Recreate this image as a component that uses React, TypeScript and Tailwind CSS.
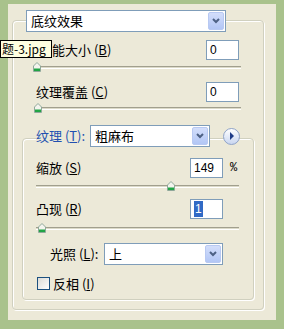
import React from "react";

const cjk = { fontFamily: '"Noto Sans CJK SC", "Noto Sans", sans-serif' };

function Thumb() {
  return (
    <svg width="8" height="10" viewBox="0 0 8 10" className="block">
      <polygon points="4,0.5 7.5,4 7.5,9.5 0.5,9.5 0.5,4" fill="#f4f4ee" stroke="#8fa89a" strokeWidth="1" />
      <rect x="1" y="6.5" width="6" height="2.5" fill="#21a545" />
    </svg>
  );
}

function Slider({ pos, width }: { pos: number; width: number }) {
  return (
    <div className="relative h-[10px]" style={{ width }}>
      <div className="absolute left-0 right-0 top-[4px] h-[3px] border-t border-t-[#a19f8e] border-b border-b-white bg-[#dcdac8]" />
      <div className="absolute top-0" style={{ left: pos }}>
        <Thumb />
      </div>
    </div>
  );
}

function Combo({ text, w }: { text: string; w: number }) {
  return (
    <div
      className="flex h-[22px] items-stretch border border-[#7f9db9] bg-white p-[1px]"
      style={{ width: w }}
    >
      <div className="flex-1 pl-[3px] text-[13px] leading-[18px] text-black" style={cjk}>
        {text}
      </div>
      <div className="flex w-[16px] items-center justify-center rounded-[2px] border border-[#b8c9f2] bg-gradient-to-b from-[#d3defb] to-[#b2c6f5]">
        <svg width="8" height="6" viewBox="0 0 8 6">
          <polyline points="1,1 4,4 7,1" fill="none" stroke="#4d6185" strokeWidth="2" />
        </svg>
      </div>
    </div>
  );
}

function NumBox({ children }: { children: React.ReactNode }) {
  return (
    <div
      className="flex h-[20px] w-[33px] items-center border border-[#7f9db9] bg-white pl-[3px] text-[12px] leading-[16px] text-black"
      style={{ fontFamily: '"Liberation Sans", sans-serif' }}
    >
      {children}
    </div>
  );
}

function Label({ text, k }: { text: string; k: string }) {
  return (
    <span className="text-[13px] leading-[18px] text-black" style={cjk}>
      {text} (<u>{k}</u>)
    </span>
  );
}

export default function App() {
  return (
    <div className="relative h-[329px] w-[284px] bg-[#a9c28c] pt-[4px] pl-[8px] text-[13px] leading-[18px]">
      <div className="flex h-[316px] w-[268px] flex-col bg-[#ece9d8] pl-[4px] pt-[16px]">
        {/* outer group */}
        <div className="flex w-[252px] flex-col rounded-[4px] border border-[#d0d0bf] shadow-[inset_1px_1px_0_#ffffff,1px_1px_0_#ffffff]">
          <div className="-mt-[11px] ml-[13px]">
            <Combo text="底纹效果" w={200} />
          </div>
          <div className="mt-[8px] flex h-[20px] items-center justify-between pl-[39px] pr-[24px]">
            <Label text="能大小" k="B" />
            <NumBox>0</NumBox>
          </div>
          <div className="mt-[2px] ml-[23px]">
            <Slider pos={-3} width={205} />
          </div>
          <div className="mt-[10px] flex h-[20px] items-center justify-between pl-[23px] pr-[24px]">
            <Label text="纹理覆盖" k="C" />
            <NumBox>0</NumBox>
          </div>
          <div className="mt-[1px] ml-[23px]">
            <Slider pos={-2} width={205} />
          </div>

          {/* inner group */}
          <div className="mt-[25px] mb-[9px] ml-[9px] flex w-[232px] flex-col rounded-[4px] border border-[#d0d0bf] pb-[9px] shadow-[inset_1px_1px_0_#ffffff,1px_1px_0_#ffffff]">
            <div className="-mt-[14px] flex h-[22px] items-center pl-[13px]">
              <span className="w-[54px] bg-[#ece9d8] text-[13px] leading-[18px] text-[#2150b0]" style={cjk}>
                纹理 (<u>T</u>):
              </span>
              <Combo text="粗麻布" w={120} />
              <div className="ml-[13px] flex h-[17px] w-[17px] items-center justify-center rounded-full border border-[#8fa3c8] bg-gradient-to-b from-white to-[#c9d6f0]">
                <svg width="6" height="8" viewBox="0 0 6 8">
                  <polygon points="1,0 5,4 1,8" fill="#1f3c88" />
                </svg>
              </div>
            </div>
            <div className="mt-[11px] flex h-[20px] items-center pl-[13px]">
              <div className="flex w-[154px] items-center">
                <Label text="缩放" k="S" />
              </div>
              <NumBox>149</NumBox>
              <span className="ml-[7px] text-[12px] leading-[16px] text-black" style={{ fontFamily: '"Liberation Mono", monospace' }}>
                %
              </span>
            </div>
            <div className="mt-[3px] ml-[13px]">
              <Slider pos={131} width={203} />
            </div>
            <div className="mt-[8px] flex h-[20px] items-center pl-[13px]">
              <div className="flex w-[154px] items-center">
                <Label text="凸现" k="R" />
              </div>
              <NumBox>
                <span className="bg-[#316ac5] px-[1px] text-white">1</span>
              </NumBox>
            </div>
            <div className="mt-[4px] ml-[13px]">
              <Slider pos={2} width={203} />
            </div>
            <div className="mt-[10px] flex h-[22px] items-center pl-[27px]">
              <span className="w-[54px] text-[13px] leading-[18px] text-black" style={cjk}>
                光照 (<u>L</u>):
              </span>
              <Combo text="上" w={119} />
            </div>
            <div className="mt-[12px] flex h-[13px] items-center pl-[14px]">
              <div className="h-[13px] w-[13px] border border-[#1c5180] bg-gradient-to-br from-[#dcdcd7] to-white" />
              <span className="ml-[3px] text-[13px] leading-[18px] text-black" style={cjk}>
                反相 (<u>I</u>)
              </span>
            </div>
          </div>
        </div>
      </div>

      {/* tooltip */}
      <div
        className="absolute left-0 top-[40px] flex h-[18px] w-[52px] items-center border border-black bg-[#ffffe1] pl-[1px] text-[12px] leading-[16px] text-black"
        style={cjk}
      >
        题-3.jpg
      </div>
    </div>
  );
}
